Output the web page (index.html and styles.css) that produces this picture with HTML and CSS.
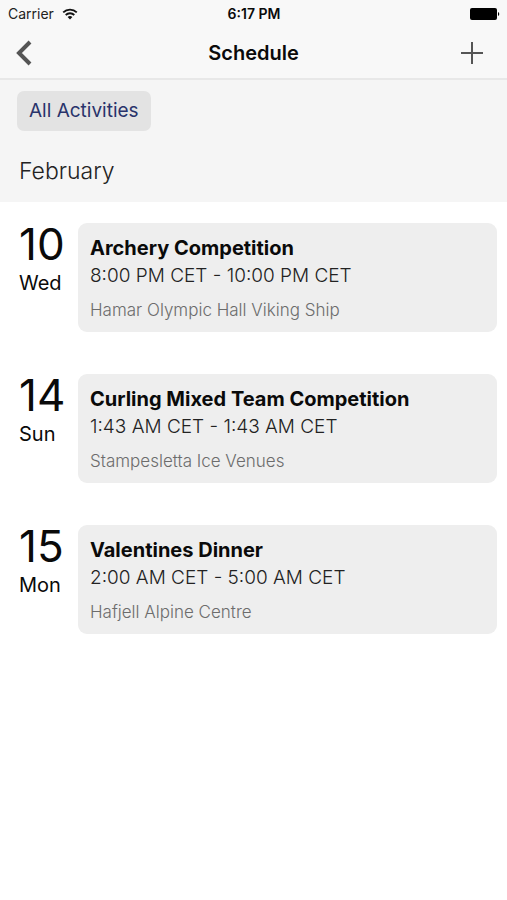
FILE: index.html
```html
<!DOCTYPE html>
<html lang="en">
<head>
<meta charset="utf-8">
<meta name="viewport" content="width=device-width, initial-scale=1">
<title>Schedule</title>
<link rel="stylesheet" href="styles.css">
</head>
<body>
<header class="top">
  <div class="status">
    <div class="carrier">
      <span>Carrier</span>
      <svg class="wifi" viewBox="0 0 16 12" aria-hidden="true">
        <path d="M1.200 4.400a9.700 9.700 0 0 1 13.600 0M3.700 7a6.100 6.100 0 0 1 8.600 0" fill="none" stroke="currentColor" stroke-width="1.800"/>
        <path d="M8 11.600 5.600 9.100a3.400 3.400 0 0 1 4.800 0z" fill="currentColor"/>
      </svg>
    </div>
    <time class="clock">6:17 PM</time>
    <svg class="battery" viewBox="0 0 30 12" aria-hidden="true">
      <rect x="0" y="0" width="27" height="12" rx="2"/>
      <path d="M28 4a2.200 2.200 0 0 1 0 4z"/>
    </svg>
  </div>
  <nav class="bar">
    <button class="icon-button" type="button" aria-label="Back">
      <svg class="back" viewBox="0 0 16 26" aria-hidden="true"><path d="M14 2 3 13l11 11"/></svg>
    </button>
    <h1 class="title">Schedule</h1>
    <button class="icon-button add-button" type="button" aria-label="Add">
      <svg class="add" viewBox="0 0 22 22" aria-hidden="true"><path d="M11 0v22M0 11h22"/></svg>
    </button>
  </nav>
</header>
<section class="filters">
  <button class="chip" type="button">All Activities</button>
  <h2 class="month">February</h2>
</section>
<main class="days">
  <article class="day">
    <div class="date"><span class="number">10</span><span class="weekday">Wed</span></div>
    <div class="card">
      <h3 class="name">Archery Competition</h3>
      <p class="hours">8:00 PM CET - 10:00 PM CET</p>
      <p class="place">Hamar Olympic Hall Viking Ship</p>
    </div>
  </article>
  <article class="day">
    <div class="date"><span class="number">14</span><span class="weekday">Sun</span></div>
    <div class="card">
      <h3 class="name">Curling Mixed Team Competition</h3>
      <p class="hours">1:43 AM CET - 1:43 AM CET</p>
      <p class="place">Stampesletta Ice Venues</p>
    </div>
  </article>
  <article class="day">
    <div class="date"><span class="number">15</span><span class="weekday">Mon</span></div>
    <div class="card">
      <h3 class="name">Valentines Dinner</h3>
      <p class="hours">2:00 AM CET - 5:00 AM CET</p>
      <p class="place">Hafjell Alpine Centre</p>
    </div>
  </article>
</main>
</body>
</html>
```
FILE: styles.css
```css
* { box-sizing: border-box; }
body {
  margin: 0;
  background: #fff;
  color: #0a0a0a;
  font-family: Inter, "Liberation Sans", sans-serif;
}
h1, h2, h3, p { margin: 0; }
button {
  border: 0;
  background: none;
  font-family: inherit;
  cursor: pointer;
}
.top {
  background: #f8f8f8;
  border-bottom: 2px solid #e8e8e8;
}
.status {
  display: grid;
  grid-template-columns: 1fr auto 1fr;
  align-items: center;
  height: 27px;
  padding: 0 7px 0 8px;
  font-size: 14px;
  line-height: 20px;
}
.carrier {
  display: flex;
  align-items: center;
  gap: 8px;
  color: #222;
}
.wifi { width: 16px; height: 12px; color: #111; }
.clock { font-weight: 600; }
.battery { width: 30px; height: 12px; justify-self: end; }
.bar {
  display: grid;
  grid-template-columns: 1fr auto 1fr;
  align-items: center;
  height: 51px;
  padding: 0 12px;
}
.icon-button {
  display: flex;
  justify-self: start;
  padding: 4px;
  color: #555;
}
.add-button { justify-self: end; padding: 12px; }
.icon-button path { fill: none; stroke: currentColor; }
.back { width: 16px; height: 26px; stroke-width: 4; }
.add { width: 22px; height: 22px; stroke-width: 2; }
.title { font-size: 20px; line-height: 24px; font-weight: 600; }
.filters {
  padding: 11px 17px 16px;
  background: #f5f5f5;
}
.chip {
  display: block;
  padding: 8px 12px;
  border-radius: 7px;
  background: #e3e3e3;
  color: #29336b;
  font-size: 19px;
  line-height: 24px;
}
.month {
  margin: 25px 2px 0;
  color: #222;
  font-size: 23px;
  line-height: 30px;
  font-weight: 300;
}
.days {
  display: grid;
  gap: 42px;
  padding: 21px 10px 21px 19px;
}
.day {
  display: grid;
  grid-template-columns: 59px 1fr;
}
.date {
  display: flex;
  flex-direction: column;
}
.number { font-size: 44px; line-height: 42px; }
.weekday { margin-top: 5px; font-size: 20px; line-height: 26px; }
.card {
  padding: 11px 12px 10px;
  border-radius: 9px;
  background: #eee;
}
.name { font-size: 20px; line-height: 28px; font-weight: 700; }
.hours { color: #222; font-size: 19px; line-height: 28px; font-weight: 300; }
.place { margin-top: 8px; color: #6c6c6c; font-size: 17px; line-height: 24px; font-weight: 300; }
```
